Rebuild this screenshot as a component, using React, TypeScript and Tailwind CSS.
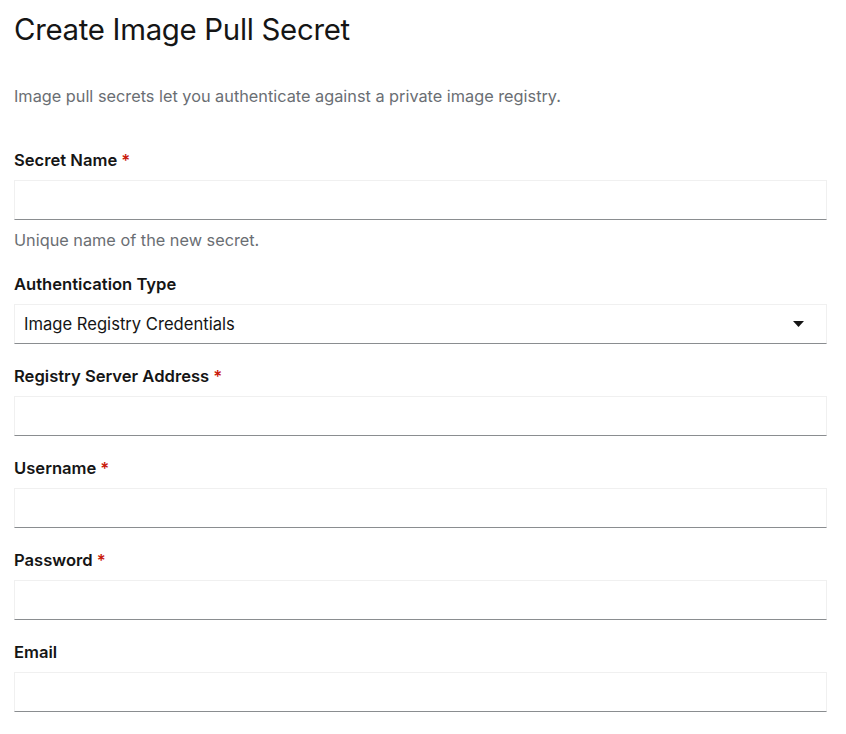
import { useState } from 'react';

type Field = {
  id: string;
  label: string;
  required?: boolean;
  type?: string;
};

const fields: Field[] = [
  { id: 'registry', label: 'Registry Server Address', required: true },
  { id: 'username', label: 'Username', required: true },
  { id: 'password', label: 'Password', required: true, type: 'password' },
  { id: 'email', label: 'Email', type: 'email' },
];

function Label({ htmlFor, text, required }: { htmlFor: string; text: string; required?: boolean }) {
  return (
    <label htmlFor={htmlFor} className="block text-[16.6px] leading-6 font-semibold text-[#151515]">
      {text}
      {required ? <span className="ml-1 text-[#c9190b]">*</span> : null}
    </label>
  );
}

const inputClass =
  'mt-2 block h-10 w-full border border-[#f0f0f0] border-b-[#8a8d90] bg-white px-2.5 text-[16px] text-[#151515] outline-none focus:border-b-2 focus:border-b-[#06c]';

export default function App() {
  const [values, setValues] = useState<Record<string, string>>({});
  const [authType, setAuthType] = useState('credentials');

  const update = (id: string, v: string) => setValues((prev) => ({ ...prev, [id]: v }));

  return (
    <div className="min-h-screen bg-white font-['Inter','Noto_Sans',sans-serif] text-[#151515]">
      <div className="pl-[14px] pr-[19px] pt-[10px]">
        <h1 className="text-[29.4px] leading-10 font-normal tracking-[-0.3px]">Create Image Pull Secret</h1>
        <p className="mt-[34px] text-[16.3px] leading-6 text-[#6a6e73]">
          Image pull secrets let you authenticate against a private image registry.
        </p>

        <form className="mt-[40px] flex flex-col gap-[20px]" onSubmit={(e) => e.preventDefault()}>
          <div>
            <Label htmlFor="secret-name" text="Secret Name" required />
            <input
              id="secret-name"
              className={inputClass}
              value={values['secret-name'] ?? ''}
              onChange={(e) => update('secret-name', e.target.value)}
            />
            <p className="mt-2 text-[16.3px] leading-6 text-[#6a6e73]">Unique name of the new secret.</p>
          </div>

          <div>
            <Label htmlFor="auth-type" text="Authentication Type" />
            <div className="relative mt-2">
              <select
                id="auth-type"
                value={authType}
                onChange={(e) => setAuthType(e.target.value)}
                className="block h-10 w-full appearance-none border border-[#f0f0f0] border-b-[#8a8d90] bg-white pl-[9px] pr-10 text-[16.6px] text-[#151515] outline-none"
              >
                <option value="credentials">Image Registry Credentials</option>
                <option value="upload">Upload Configuration File</option>
              </select>
              <svg
                className="pointer-events-none absolute right-[23px] top-1/2 -translate-y-1/2"
                width="11"
                height="7"
                viewBox="0 0 11 7"
                fill="#151515"
              >
                <path d="M0 0.5h11L5.5 6.5z" />
              </svg>
            </div>
          </div>

          {fields.map((f) => (
            <div key={f.id}>
              <Label htmlFor={f.id} text={f.label} required={f.required} />
              <input
                id={f.id}
                type={f.type ?? 'text'}
                className={inputClass}
                value={values[f.id] ?? ''}
                onChange={(e) => update(f.id, e.target.value)}
              />
            </div>
          ))}
        </form>
      </div>
    </div>
  );
}
